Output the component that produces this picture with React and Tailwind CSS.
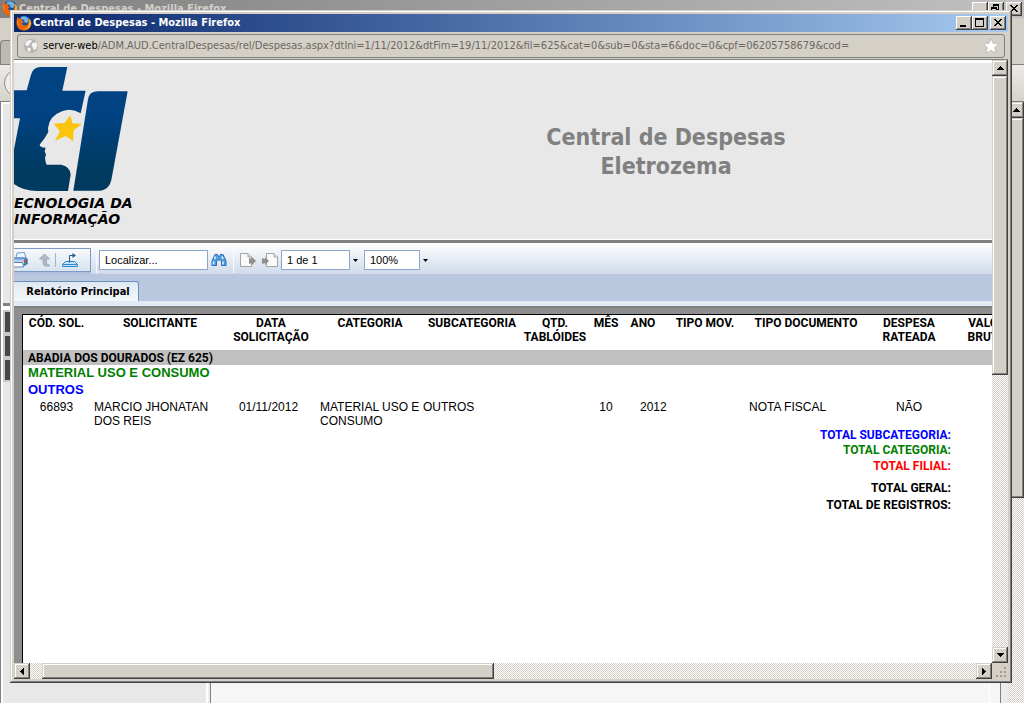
import React from "react";

const UI = "font-['DejaVu_Sans_Condensed','DejaVu_Sans',sans-serif]";
const CHECKER =
  "bg-[repeating-conic-gradient(#d4d0c8_0_25%,#ffffff_0_50%)] bg-[length:2px_2px]";
const SCROLL_BEVEL =
  "bg-[#d4d0c8] shadow-[inset_-1px_-1px_#404040,inset_1px_1px_#d4d0c8,inset_-2px_-2px_#808080,inset_2px_2px_#ffffff]";
const CAPTION_BEVEL =
  "bg-[#d4d0c8] shadow-[inset_-1px_-1px_#404040,inset_1px_1px_#ffffff,inset_-2px_-2px_#808080]";

function FirefoxIcon() {
  return (
    <svg viewBox="0 0 16 16" className="size-4 shrink-0" aria-hidden="true">
      <circle cx="8" cy="8" r="7.3" fill="#1d4f9c" />
      <path d="M4 3Q8 -.5 12 3Q14 6 11 8Q8 8 8 5Q6 5 4 3Z" fill="#6db4e8" />
      <path
        d="M1.6 1.6L3.6 4Q5 3.4 6.6 3.8Q5.6 5 6 6L8 6.7Q7.6 8 6 8.2Q6.4 10.4 9 10.6Q12 10.2 12.6 7.4Q12.8 5 11.6 3.4Q15.6 5.4 15.4 9Q14.4 15 8 15.7Q1.4 15.2 .5 9Q.4 4.4 1.6 1.6Z"
        fill="#e8660c"
      />
      <path
        d="M13.2 3.4Q16 7 14.4 10.6Q12.4 14.6 8 14.4Q11.6 13.6 12.8 10.6Q14 7.4 13.2 3.4Z"
        fill="#fbc52a"
      />
      <path d="M2 4Q1.4 8 3.6 10.4Q2 10 1.2 8Q1.2 5.4 2 4Z" fill="#fba32a" />
    </svg>
  );
}

function GlobeIcon() {
  return (
    <svg viewBox="0 0 16 16" className="size-4 shrink-0" aria-hidden="true">
      <circle cx="8" cy="8" r="7" fill="#b4b4b4" />
      <path
        d="M3 4Q5 1.6 8 2L9 3.4L7 5L6.4 7L4 8L2 7ZM9.6 5L13 4L14.4 7.4L13 11L10.6 12L9.6 9L8.6 7ZM4.6 9.4L7.6 10L7.4 13L6 14L4.4 12Z"
        fill="#f4f4f4"
      />
    </svg>
  );
}

function StarIcon() {
  return (
    <svg viewBox="0 0 16 16" className="size-4" aria-hidden="true">
      <path
        d="M8 .6L10 5.4L15.6 5.8L11.6 9.4L12.8 15.2L8 12.2L3.2 15.2L4.4 9.4L.4 5.8L6 5.4Z"
        fill="#ffffff"
        stroke="#bcb9b4"
        strokeWidth=".8"
      />
    </svg>
  );
}

function Arrow({ dir }) {
  const paths = {
    up: "M0 4H7L3.5 0Z",
    down: "M0 0H7L3.5 4Z",
    left: "M4 0V7L0 3.5Z",
    right: "M0 0V7L4 3.5Z",
  };
  const tall = dir === "left" || dir === "right";
  return (
    <svg
      viewBox={tall ? "0 0 4 7" : "0 0 7 4"}
      className={tall ? "h-[7px] w-1" : "h-1 w-[7px]"}
      shapeRendering="crispEdges"
      aria-hidden="true"
    >
      <path d={paths[dir]} fill="#000" />
    </svg>
  );
}

function ScrollButton({ dir, label }) {
  return (
    <button
      aria-label={label}
      className={`flex size-4 shrink-0 items-center justify-center ${SCROLL_BEVEL}`}
    >
      <Arrow dir={dir} />
    </button>
  );
}

function CaptionButton({ label, children }) {
  return (
    <button
      aria-label={label}
      className={`flex h-[14px] w-4 items-center justify-center ${CAPTION_BEVEL}`}
    >
      <svg
        viewBox="0 0 16 14"
        className="h-[14px] w-4"
        fill="#000"
        shapeRendering="crispEdges"
        aria-hidden="true"
      >
        {children}
      </svg>
    </button>
  );
}

const CLOSE = (
  <path d="M4 3h2v1h1v1h2v-1h1v-1h2v1h-1v1h-1v1h-1v1h1v1h1v1h1v1h-2v-1h-1v-1h-2v1h-1v1h-2v-1h1v-1h1v-1h1v-1h-1v-1h-1v-1h-1z" />
);

function BackWindow() {
  return (
    <div className="flex h-full flex-col bg-[#d4d0c8]">
      <div className="flex h-[18px] shrink-0 items-start bg-linear-to-r from-[#808080] to-[#c0c0c0] pl-[2px]">
        <FirefoxIcon />
        <span className={`pl-px pt-px text-[11px] leading-4 font-bold text-[#d4d0c8] ${UI}`}>
          Central de Despesas - Mozilla Firefox
        </span>
        <div className="ml-auto flex gap-[2px] pt-[2px] pr-[2px]">
          <div className="flex">
            <CaptionButton label="Minimizar janela principal">
              <path d="M4 9h6v2h-6z" />
            </CaptionButton>
            <CaptionButton label="Restaurar janela principal">
              <path
                fillRule="evenodd"
                d="M5 2h6v6h-2v-1h1v-3h-4v1h-1zM3 5h6v6h-6zM4 7v3h4v-3z"
              />
            </CaptionButton>
          </div>
          <CaptionButton label="Fechar janela principal">{CLOSE}</CaptionButton>
        </div>
      </div>
      <div className="h-[22px] shrink-0" />
      <div className="h-[25px] w-full shrink-0 border-b border-[#808080]">
        <div className="h-full w-40 rounded-tl border-t border-l border-[#808080] bg-[#bdb9b1]" />
      </div>
      <div className="flex h-[37px] shrink-0 items-center border-b border-[#808080] bg-linear-to-b from-[#ecebe8] to-[#d6d2ca] pl-1">
        <div className="size-7 rounded-full border border-[#8b8b8b] bg-[#efeeec]" />
      </div>
      <div className="flex min-h-0 flex-1 border-l border-[#808080]">
        <div className="flex w-[205px] flex-col border-t-2 border-l-2 border-white bg-[#e8e8e8]">
          <div className="mt-[199px] h-[3px] bg-[#808080]" />
          <div className="h-1 bg-white" />
          <div className="flex w-5 flex-col gap-1 bg-[#c8c8c8] p-[2px]">
            <div className="h-5 bg-[#484848]" />
            <div className="h-5 bg-[#484848]" />
            <div className="h-5 bg-[#484848]" />
          </div>
        </div>
        <div className="flex-1 border-l-2 border-white bg-[#ececec] pl-[2px]">
          <div className="mr-[7px] h-full border-x border-[#808080] bg-[#f6f6f6]">
            <div className="h-full border-x border-[#f6f6f6] pr-[9px]">
              <div className="h-full border-r border-white" />
            </div>
          </div>
        </div>
        <div className={`flex w-4 shrink-0 flex-col ${CHECKER}`}>
          <ScrollButton dir="up" label="Rolar página para cima" />
          <div className={`h-[380px] ${SCROLL_BEVEL}`} />
        </div>
      </div>
    </div>
  );
}

function Logo() {
  return (
    <div className="w-[122px] shrink-0 pt-[3px]">
      <svg viewBox="42 18 348 378" className="h-[126px] w-[116px]" role="img" aria-label="TI">
        <defs>
          <linearGradient id="navy" gradientUnits="userSpaceOnUse" x1="0" y1="18" x2="0" y2="396">
            <stop offset="0.4" stopColor="#004282" />
            <stop offset="0.85" stopColor="#003a5e" />
          </linearGradient>
        </defs>
        <path
          d="M42 91H80L93 44Q99 21 122 21H202L187 92H257L242 160Q215 142 186 154Q148 168 144 204L145 216Q136 234 119 254Q119 262 137 263L134 274L138 284L135 293Q136 306 140 314H184Q212 320 212 345L204 393H112Q70 393 42 372V268L60 175H42Z"
          fill="url(#navy)"
        />
        <path d="M264 118Q268 94 294 94H383L335 355Q328 392 298 392H220Z" fill="url(#navy)" />
        <path
          d="M211 166L217 190L246 192L221 211L219 244L197 228L165 242L180 214L161 191L193 189Z"
          fill="#fcc40c"
        />
      </svg>
      <div className="pt-[3px] font-['DejaVu_Sans',sans-serif] text-[14px] leading-4 font-bold whitespace-nowrap text-black italic">
        <div>ECNOLOGIA DA</div>
        <div>INFORMAÇÃO</div>
      </div>
    </div>
  );
}

function PrinterIcon() {
  return (
    <svg viewBox="0 0 16 16" className="size-4" aria-hidden="true">
      <path d="M5 1L12.500 .5L14 6H4Z" fill="#f2f7fd" stroke="#6f9bd0" />
      <path d="M0 7L3 5H14L15.500 7V12L12 14H0Z" fill="#6f9cd2" />
      <path d="M1 7.500H12V12H1Z" fill="#b7d0ee" />
      <path d="M12 7.500L15.500 6.500V12L12 14Z" fill="#3c6aa8" />
      <path d="M1.500 10.500H10.500L11.500 15H1Z" fill="#ffffff" stroke="#5d86bd" />
      <circle cx="13" cy="9" r="1.200" fill="#e0482e" />
      <circle cx="13" cy="11.500" r="1" fill="#4db04a" />
    </svg>
  );
}

function UpIcon() {
  return (
    <svg viewBox="0 0 14 14" className="size-[14px]" aria-hidden="true">
      <path
        d="M6.500 1L11.500 6H8.500V10Q8.500 12 11.500 12V13H8.500Q5 13 5 10V6H1.500Z"
        fill="#b4b8c6"
        stroke="#a3a8b8"
      />
    </svg>
  );
}

function ExportIcon() {
  return (
    <svg viewBox="0 0 18 16" className="h-4 w-[18px]" fill="none" aria-hidden="true">
      <path d="M4.500 9.500L1.500 12.500V14.500H16.500V12.500L13.500 9.500Z" fill="#c4e2fb" stroke="#2f86d0" />
      <path d="M2 12.500H16" stroke="#2f86d0" />
      <path d="M8.500 10.500V3.500H12" stroke="#26598c" />
      <path d="M11.500 1L15 3.500L11.500 6Z" fill="#26598c" />
    </svg>
  );
}

function BinocularsIcon() {
  return (
    <svg viewBox="0 0 16 14" className="h-[14px] w-4" aria-hidden="true">
      <path
        d="M4 1.500H6.500L7.500 3.500H8.500L9.500 1.500H12L15 8V12.500H10.500V8L9.500 7H6.500L5.500 8V12.500H1V8Z"
        fill="#4f9ee0"
        stroke="#2a6cb0"
      />
      <path
        d="M2.500 8.500V11.500M12 8.500V11.500M4.500 3.500L3.500 6M11 3.500L12 6"
        stroke="#e2f2ff"
        strokeWidth="1.500"
      />
    </svg>
  );
}

function PageIcon({ flip }) {
  return (
    <svg viewBox="0 0 16 14" className="h-[14px] w-4" aria-hidden="true">
      <g transform={flip ? "translate(4 0)" : undefined}>
        <path d="M.5 .5H8L11.500 4V13.500H.5Z" fill="#fafafa" stroke="#a4a4a4" />
        <path d="M8 .5V4H11.500" fill="#e2e2e2" stroke="#a4a4a4" />
      </g>
      <path
        d={flip ? "M0 5L3 6V4L7 8L3 12V10L0 11Z" : "M9 5L12 6V4L16 8L12 12V10L9 11Z"}
        fill="#8f8f8f"
      />
    </svg>
  );
}

function Divider() {
  return <div className="h-[26px] w-px shrink-0 bg-[#f6f9fd]" />;
}

const FIELD =
  "h-5 shrink-0 border border-[#8ca6cc] bg-white px-[5px] text-[11px] text-black outline-none font-['Liberation_Sans',Arial,sans-serif]";

function MenuCaret({ label }) {
  return (
    <button aria-label={label} className="ml-[3px] flex w-[6px]">
      <svg viewBox="0 0 5 3" className="h-[3px] w-[5px]" aria-hidden="true">
        <path d="M0 0H5L2.500 3Z" />
      </svg>
    </button>
  );
}

function Toolbar() {
  return (
    <div className="flex h-[32px] shrink-0 items-center border-b border-[#bcc0dc] bg-linear-to-b from-white to-[#cfdbeb] pt-[3px]">
      <div className="flex h-6 w-[77px] shrink-0 items-center border border-l-0 border-[#7c9ac2] bg-linear-to-b from-[#f6f9fc] to-[#d8e3f0] shadow-[0_2px_#b0c3de]">
        <button aria-label="Imprimir" className="-ml-[2px]">
          <PrinterIcon />
        </button>
        <button aria-label="Subir um nível" className="ml-[10px]">
          <UpIcon />
        </button>
        <div className="ml-[3px] h-[14px] w-px bg-[#a3b4cc]" />
        <button aria-label="Exportar" className="ml-[5px]">
          <ExportIcon />
        </button>
      </div>
      <div className="ml-[5px] flex items-center">
        <Divider />
        <input
          aria-label="Localizar"
          defaultValue="Localizar..."
          className={`ml-[2px] w-[109px] ${FIELD}`}
        />
        <button aria-label="Localizar texto" className="ml-[3px]">
          <BinocularsIcon />
        </button>
        <div className="ml-[6px]">
          <Divider />
        </div>
        <button aria-label="Página anterior" className="ml-[6px]">
          <PageIcon />
        </button>
        <button aria-label="Próxima página" className="ml-[6px]">
          <PageIcon flip />
        </button>
        <input aria-label="Página" defaultValue="1 de 1" className={`ml-[3px] w-[69px] ${FIELD}`} />
        <MenuCaret label="Escolher página" />
        <input aria-label="Zoom" defaultValue="100%" className={`ml-[5px] w-14 ${FIELD}`} />
        <MenuCaret label="Escolher zoom" />
      </div>
    </div>
  );
}

const BOLD = "font-['Roboto','Liberation_Sans',sans-serif] font-bold";

function TotalRow({ label, className }) {
  return (
    <tr>
      <th scope="row" colSpan={11} className={`pr-px text-right align-middle ${BOLD} ${className}`}>
        {label}
      </th>
      <td />
    </tr>
  );
}

function Report() {
  return (
    <div className="h-full overflow-hidden border-t border-l border-black bg-white">
      <table className="w-[1001px] table-fixed border-collapse font-['Liberation_Sans',Arial,sans-serif] text-[12px] leading-[14px] text-black">
        <colgroup>
          <col className="w-[69px]" />
          <col className="w-[132px]" />
          <col className="w-[94px]" />
          <col className="w-[104px]" />
          <col className="w-[100px]" />
          <col className="w-[66px]" />
          <col className="w-[36px]" />
          <col className="w-[46px]" />
          <col className="w-[70px]" />
          <col className="w-[132px]" />
          <col className="w-[80px]" />
          <col className="w-[72px]" />
        </colgroup>
        <thead className={BOLD}>
          <tr className="h-[35px] align-top whitespace-nowrap *:pt-px *:text-center *:font-bold">
            <th className="pr-[2px]">CÓD. SOL.</th>
            <th className="pl-1">SOLICITANTE</th>
            <th>
              DATA
              <br />
              SOLICITAÇÃO
            </th>
            <th>CATEGORIA</th>
            <th>SUBCATEGORIA</th>
            <th>
              QTD.
              <br />
              TABLÓIDES
            </th>
            <th>MÊS</th>
            <th className="pr-2">ANO</th>
            <th>TIPO MOV.</th>
            <th>TIPO DOCUMENTO</th>
            <th className="pr-[6px]">
              DESPESA
              <br />
              RATEADA
            </th>
            <th className="pr-[2px]">
              VALOR
              <br />
              BRUTO
            </th>
          </tr>
        </thead>
        <tbody>
          <tr className="h-[15px] bg-[#c0c0c0]">
            <th scope="rowgroup" colSpan={12} className={`pl-[5px] text-left ${BOLD}`}>
              ABADIA DOS DOURADOS (EZ 625)
            </th>
          </tr>
          <tr className="h-4">
            <th scope="rowgroup" colSpan={12} className="pl-[5px] text-left text-[13px] text-[#008000]">
              MATERIAL USO E CONSUMO
            </th>
          </tr>
          <tr className="h-[18px]">
            <th scope="rowgroup" colSpan={12} className="pl-[5px] text-left text-[13px] text-[#0000ff]">
              OUTROS
            </th>
          </tr>
          <tr className="align-top *:pt-px">
            <td className="pr-[2px] text-center">66893</td>
            <td className="pr-1 pl-[2px]">MARCIO JHONATAN DOS REIS</td>
            <td className="pr-[5px] text-center">01/11/2012</td>
            <td className="pl-[2px]">MATERIAL USO E CONSUMO</td>
            <td className="pl-px">OUTROS</td>
            <td />
            <td className="text-center">10</td>
            <td className="pl-4">2012</td>
            <td />
            <td className="pl-[9px]">NOTA FISCAL</td>
            <td className="pr-[6px] text-center">NÃO</td>
            <td />
          </tr>
          <TotalRow label="TOTAL SUBCATEGORIA:" className="h-[14px] text-[#0000ff]" />
          <TotalRow label="TOTAL CATEGORIA:" className="h-4 text-[#008000]" />
          <TotalRow label="TOTAL FILIAL:" className="h-4 text-[#ff0000]" />
          <TotalRow label="TOTAL GERAL:" className="h-[22px] pt-[6px]" />
          <TotalRow label="TOTAL DE REGISTROS:" className="h-[18px]" />
        </tbody>
      </table>
    </div>
  );
}

function Page() {
  return (
    <div className="flex min-w-0 flex-1 flex-col overflow-hidden bg-white pt-[3px]">
      <header className="flex h-[176px] shrink-0 overflow-hidden bg-[#e8e8e8]">
        <Logo />
        <h1
          className={`flex-1 pt-[60px] pl-[204px] text-center text-[23px] leading-[29px] font-bold text-[#808080] ${UI}`}
        >
          Central de Despesas
          <br />
          Eletrozema
        </h1>
      </header>
      <div className="mt-px h-[3px] shrink-0 bg-[#808080]" />
      <Toolbar />
      <div className="flex h-[26px] shrink-0 items-end bg-[#b9c7df]">
        <button
          className={`h-5 w-[125px] rounded-tr-[3px] border-t border-r border-[#6f8fbb] bg-linear-to-b from-[#dfe8f2] to-[#f4f8fb] pt-px pl-1 text-[11px] font-bold text-black ${UI}`}
        >
          Relatório Principal
        </button>
      </div>
      <div className="h-[5px] shrink-0 bg-[#e4eaf4]" />
      <div className="min-h-0 flex-1 border-t-2 border-[#808080] bg-[#8e8e8e] pt-[6px] pl-2">
        <Report />
      </div>
    </div>
  );
}

function FrontWindow() {
  return (
    <div className="absolute top-[10px] right-[12px] bottom-[20px] left-[10px] flex flex-col bg-[#d4d0c8] p-1 shadow-[inset_-1px_-1px_#404040,inset_1px_1px_#d4d0c8,inset_-2px_-2px_#808080,inset_2px_2px_#ffffff]">
      <div className="flex h-[18px] shrink-0 items-center bg-linear-to-r from-[#0a246a] to-[#a6caf0] pr-[2px] pl-[2px]">
        <FirefoxIcon />
        <span className={`pl-px text-[11px] leading-4 font-bold text-white ${UI}`}>
          Central de Despesas - Mozilla Firefox
        </span>
        <div className="ml-auto flex gap-[2px]">
          <div className="flex">
            <CaptionButton label="Minimizar">
              <path d="M4 9h6v2h-6z" />
            </CaptionButton>
            <CaptionButton label="Maximizar">
              <path fillRule="evenodd" d="M3 2h9v9h-9zM4 4v6h7v-6z" />
            </CaptionButton>
          </div>
          <CaptionButton label="Fechar">{CLOSE}</CaptionButton>
        </div>
      </div>
      <div className="shrink-0 border-b border-[#808080] px-[3px] pt-[2px] pb-px">
        <div className="flex h-6 items-center rounded-[3px] border border-[#808080] pr-[5px] pl-[5px]">
          <GlobeIcon />
          <div className={`flex-1 pl-1 text-[11px] text-[#6b6862] ${UI}`}>
            <span className="text-black">server-web</span>
            /ADM.AUD.CentralDespesas/rel/Despesas.aspx?dtIni=1/11/2012&amp;dtFim=19/11/2012&amp;fil=625&amp;cat=0&amp;sub=0&amp;sta=6&amp;doc=0&amp;cpf=06205758679&amp;cod=
          </div>
          <button aria-label="Adicionar aos favoritos">
            <StarIcon />
          </button>
        </div>
      </div>
      <div className="flex min-h-0 flex-1">
        <Page />
        <div className={`flex w-4 shrink-0 flex-col ${CHECKER}`}>
          <ScrollButton dir="up" label="Rolar para cima" />
          <div className={`h-[299px] ${SCROLL_BEVEL}`} />
          <div className="mt-auto">
            <ScrollButton dir="down" label="Rolar para baixo" />
          </div>
        </div>
      </div>
      <div className="flex h-4 shrink-0">
        <div className={`flex flex-1 ${CHECKER}`}>
          <ScrollButton dir="left" label="Rolar para a esquerda" />
          <div className={`ml-3 w-[452px] ${SCROLL_BEVEL}`} />
          <div className="ml-auto">
            <ScrollButton dir="right" label="Rolar para a direita" />
          </div>
        </div>
        <svg viewBox="0 0 16 16" className="size-4" shapeRendering="crispEdges" aria-hidden="true">
          <path
            d="M12 4h2v2h-2zM8 8h2v2h-2zM12 8h2v2h-2zM4 12h2v2h-2zM8 12h2v2h-2zM12 12h2v2h-2z"
            fill="#a09c94"
          />
        </svg>
      </div>
    </div>
  );
}

export default function App() {
  return (
    <div className="relative h-screen w-full overflow-hidden">
      <BackWindow />
      <FrontWindow />
    </div>
  );
}
